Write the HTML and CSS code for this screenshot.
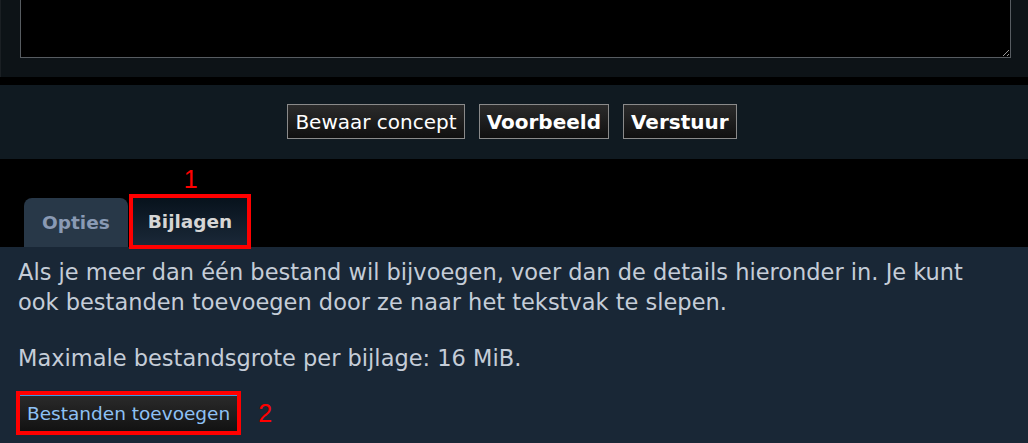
FILE: index.html
```html
<!DOCTYPE html>
<html lang="nl">
<head>
    <meta charset="utf-8">
    <link rel="stylesheet" href="styles.css">
    <title>Bericht plaatsen</title>
</head>
<body>
    <div class="editor-panel">
        <textarea class="message-box"></textarea>
    </div>
    <div class="submit-bar">
        <button class="btn">Bewaar concept</button>
        <button class="btn btn-bold">Voorbeeld</button>
        <button class="btn btn-bold">Verstuur</button>
    </div>
    <div class="tabs">
        <div class="tab">Opties</div>
        <div class="tab tab-active marked">
            Bijlagen
            <span class="marker-num marker-top">1</span>
        </div>
    </div>
    <div class="tab-panel">
        <p class="info">Als je meer dan één bestand wil bijvoegen, voer dan de details hieronder in. Je kunt ook bestanden toevoegen door ze naar het tekstvak te slepen.</p>
        <p class="info">Maximale bestandsgrote per bijlage: 16 MiB.</p>
        <div class="upload-row">
            <button class="btn-upload marked">Bestanden toevoegen</button>
            <span class="marker-num">2</span>
        </div>
    </div>
</body>
</html>
```

FILE: styles.css
```css
body {
    margin: 0;
    background: #000;
    font-family: "DejaVu Sans", Verdana, sans-serif;
    overflow: hidden;
}

.editor-panel {
    background: #0d1317;
    border-left: 1px solid #1a1f23;
    padding: 0 17px 19px 19px;
}
.message-box {
    display: block;
    box-sizing: border-box;
    width: 100%;
    height: 58px;
    margin: 0;
    background: #000;
    border: 1px solid #575c61;
    border-top: 0;
    resize: vertical;
}

.submit-bar {
    margin-top: 8px;
    background: #101a21;
    height: 74px;
    display: flex;
    justify-content: center;
    align-items: flex-start;
    gap: 14px;
    padding: 19px 4px 0 0;
    box-sizing: border-box;
}
.btn {
    height: 35px;
    padding: 0 7px;
    font-family: "DejaVu Sans", Verdana, sans-serif;
    font-size: 20px;
    color: #fff;
    background: linear-gradient(#2b2b2b, #101010);
    border: 1px solid #8a8a8a;
    border-radius: 0;
}
.btn-bold {
    font-weight: bold;
}

.tabs {
    display: flex;
    align-items: flex-end;
    gap: 5px;
    padding-left: 24px;
    height: 88px;
}
.tab {
    position: relative;
    height: 49px;
    display: flex;
    align-items: center;
    padding: 0 18px;
    font-size: 18.5px;
    font-weight: bold;
    color: #8a9ab4;
    background: #283848;
    border-radius: 8px 8px 0 0;
    box-sizing: border-box;
}
.tab-active {
    color: #d6d6d6;
    background: linear-gradient(#07121c, #1a2838);
    border-radius: 0;
    padding: 0 15px;
    height: 47px;
    margin-bottom: 2px;
}
.marked {
    outline: 4px solid #ff0000;
}
.marker-num {
    color: #ff0000;
    font-size: 25px;
    font-weight: normal;
    font-family: "Liberation Sans", Arial, sans-serif;
}
.marker-top {
    position: absolute;
    top: -33px;
    left: 51px;
}

.tab-panel {
    background: #192736;
    padding: 10px 18px 0 18px;
    height: 196px;
    box-sizing: border-box;
}
.info {
    margin: 0 0 26px 0;
    font-size: 22.5px;
    line-height: 30px;
    color: #c5cdd8;
}
.upload-row {
    display: flex;
    align-items: center;
    gap: 21px;
    margin-top: -4px;
}
.btn-upload {
    height: 36px;
    padding: 0 7px;
    font-family: "DejaVu Sans", Verdana, sans-serif;
    font-size: 18.5px;
    color: #8ec1f5;
    background: linear-gradient(#2a2a2a, #121212);
    border: 0;
    border-top: 1px solid #3a9ae0;
    border-radius: 0;
    margin-left: 2px;
}
```
